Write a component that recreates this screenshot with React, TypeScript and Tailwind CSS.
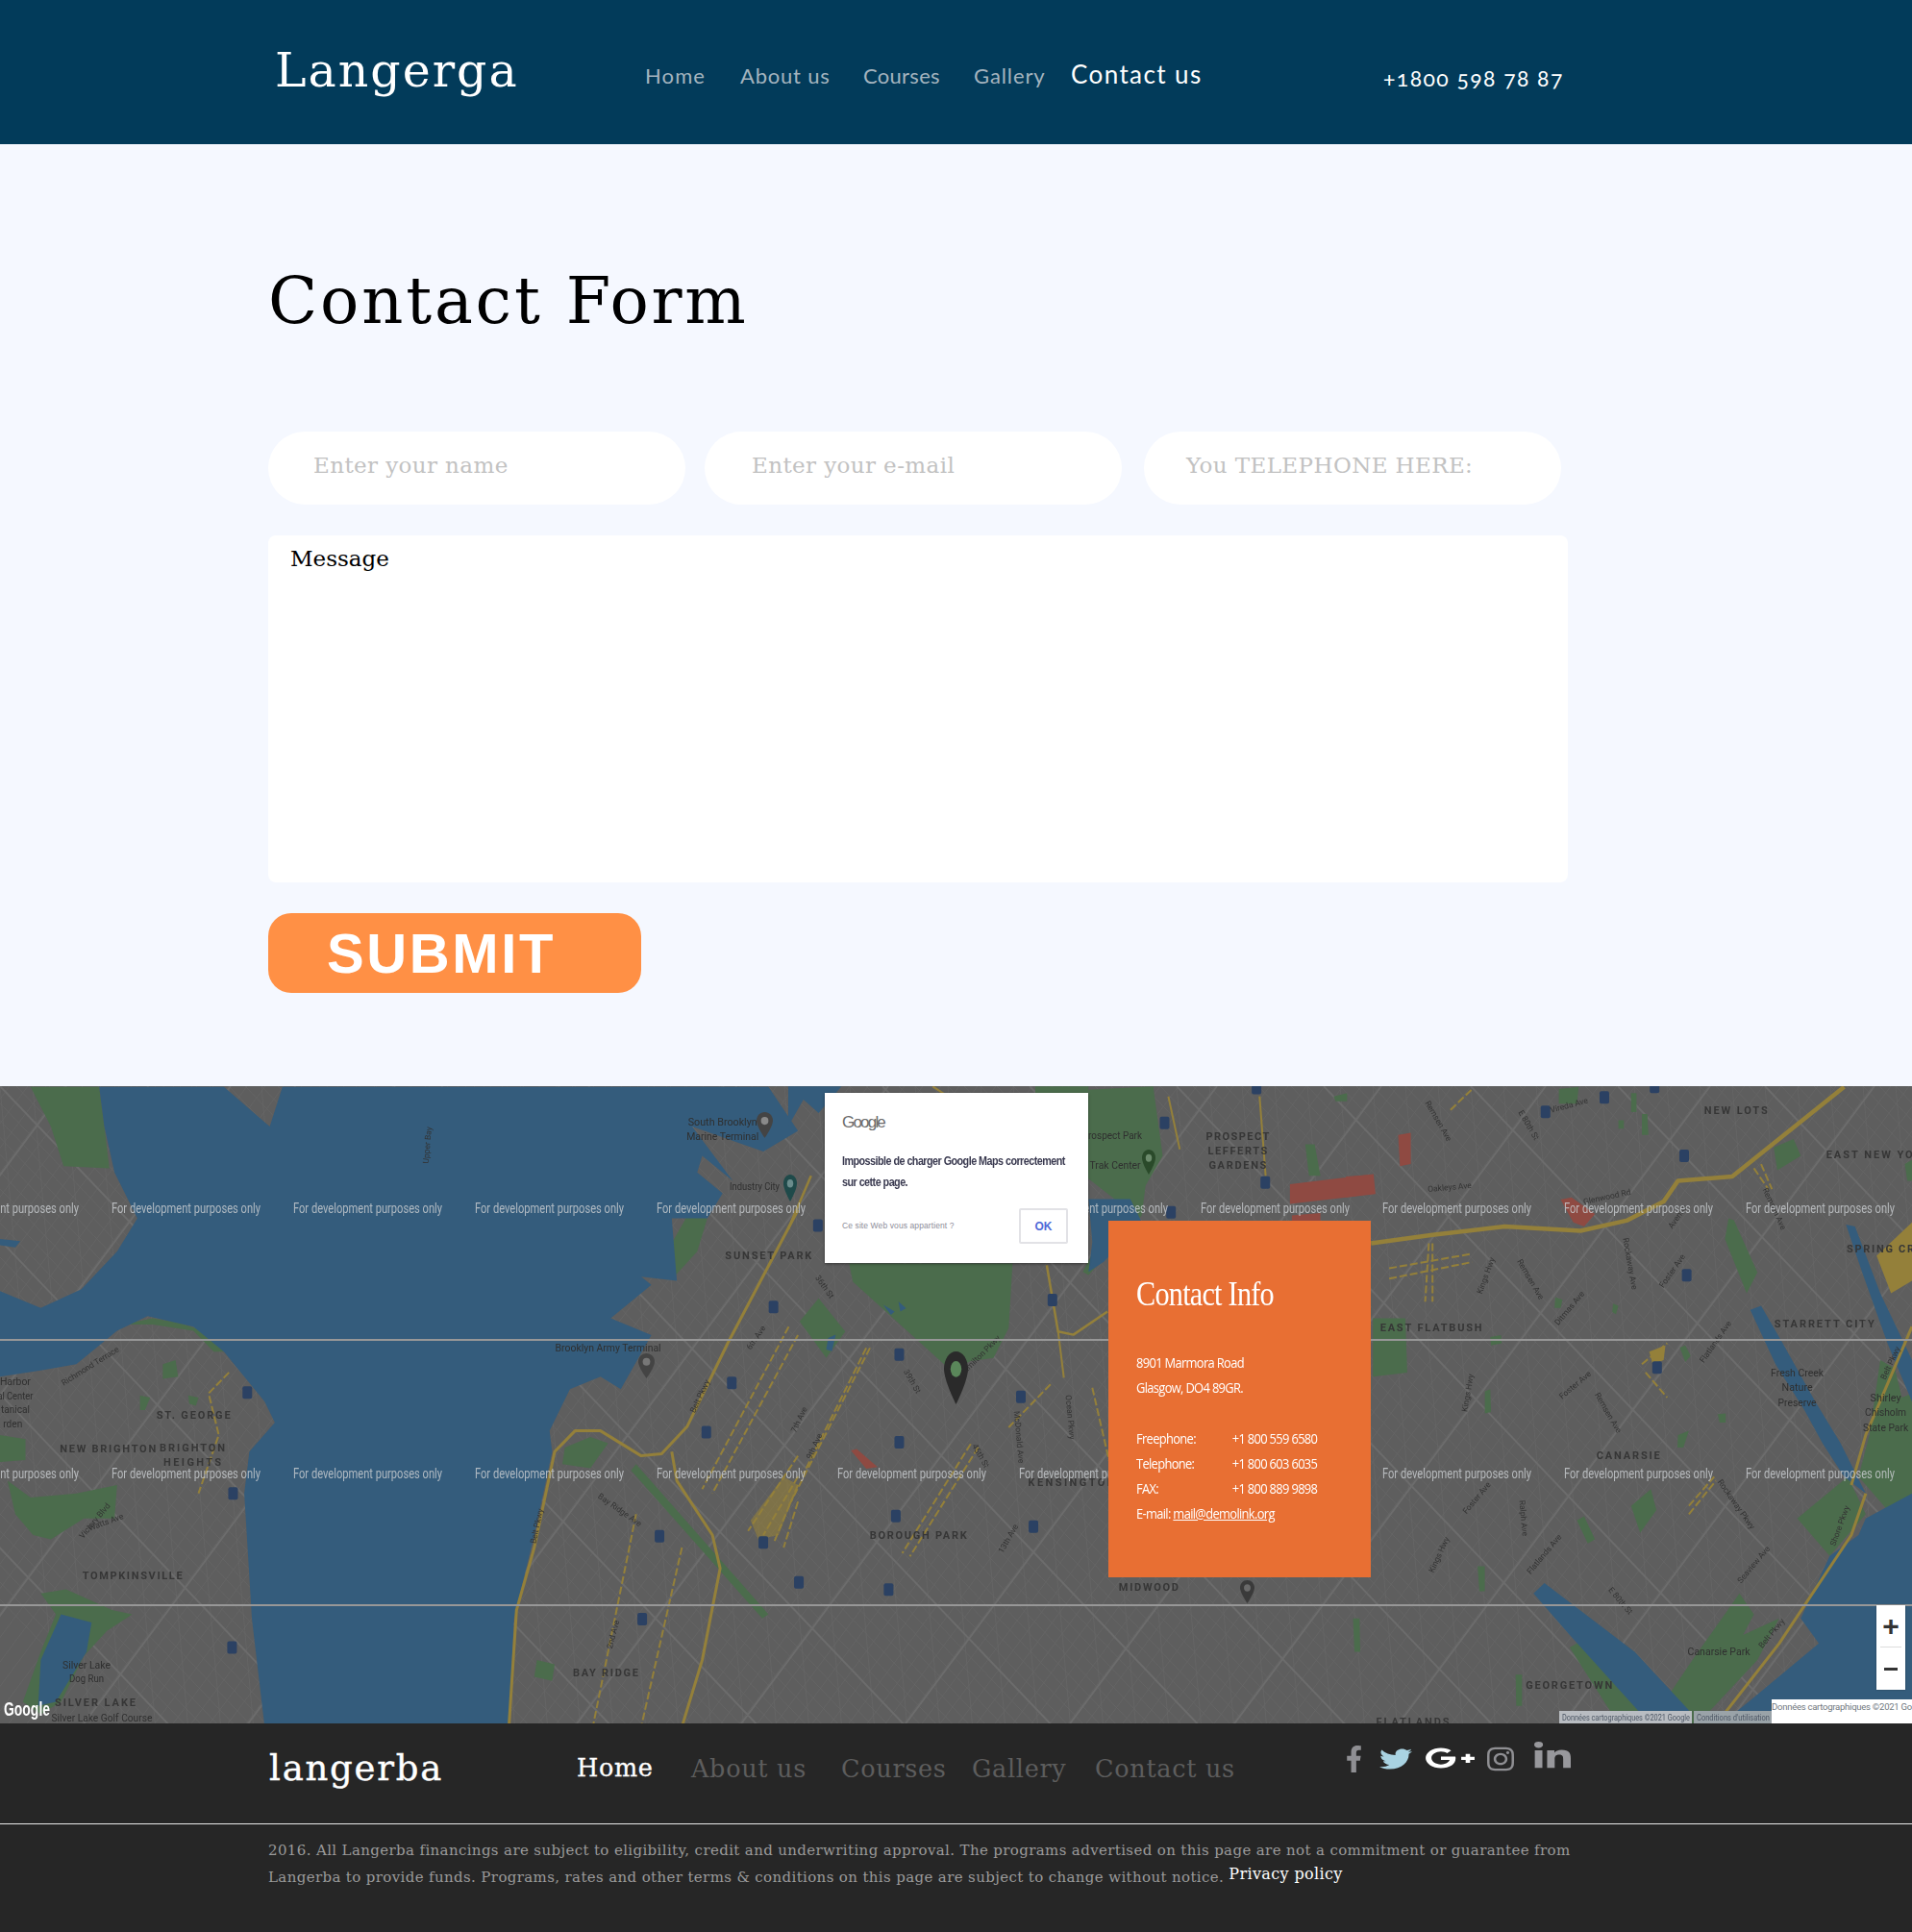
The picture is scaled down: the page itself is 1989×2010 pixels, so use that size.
import React from "react";
import { FaFacebookF, FaTwitter, FaGooglePlusG, FaInstagram, FaLinkedinIn } from "react-icons/fa";

type Zone = 3 | 4 | 5;
const fx = (z: Zone, x: number) => (z === 3 ? 820 + x / 2.529 : z === 4 ? x / 1.889 : 1400 + x / 2.662);
const fy = (z: Zone, y: number) => (z === 3 ? 1120 + y / 2.904 : 1120 + y / 2.306);
const P = (z: Zone, a: number[], close = true) => {
  let d = "";
  for (let i = 0; i < a.length; i += 2) d += (i ? "L" : "M") + fx(z, a[i]).toFixed(1) + " " + fy(z, a[i + 1]).toFixed(1);
  return d + (close ? "Z" : "");
};

const WATER = "#345c7c";
const GREEN = "#4b6c4c";
const ROAD = "#94803a";
const RED = "#8f4a42";

const waters: [Zone, number[]][] = [
  [4, [195,25,205,120,225,230,270,340,230,420,160,510,80,555,0,515,0,720,80,705,150,690,230,610,290,575,380,600,440,660,480,720,520,780,540,830,490,900,480,1000,490,1200,495,1300,520,1560,1000,1560,1010,1300,1050,1100,1085,900,1080,850,1120,750,1180,720,1220,750,1280,620,1200,580,1280,500,1260,480,1330,490,1320,340,1390,340,1420,280,1370,230,1380,190,1440,250,1360,120,1500,180,1568,130,1510,25,555,25,530,120,440,25]],
  [4, [0,390,40,395,30,410,0,405]],
  [4, [120,1290,180,1310,170,1380,110,1500,75,1510,80,1400]],
  [3, [0,30,140,30,80,110,40,70,0,150]],
  [3, [790,370,900,370,930,440,830,560,790,590,800,500]],
  [3, [250,690,280,710,270,720]],
  [3, [290,680,310,700,295,710]],
  [3, [105,790,125,780,115,830,100,825]],
  [5, [1568,1000,1440,1060,1420,1100,1340,1150,1260,1300,1310,1360,1130,1490,1030,1560,1568,1560]],
  [5, [1385,355,1410,360,1480,520,1568,680,1568,780,1500,640,1430,470]],
  [5, [520,1240,550,1215,800,1380,950,1520,940,1560,850,1560,620,1340]],
  [5, [1120,560,1150,550,1210,640,1300,780,1370,880,1440,1000,1380,960,1320,880,1270,800,1190,690]],
];
const greens: [Zone, number[]][] = [
  [4, [60,25,195,25,205,120,215,220,125,215,100,120]],
  [4, [1320,400,1350,335,1390,340,1370,420,1325,480]],
  [4, [1110,890,1160,865,1195,880,1160,940,1105,930]],
  [4, [0,860,50,870,50,920,0,925]],
  [4, [15,970,60,1010,150,1000,230,980,225,1060,165,1060,100,1110,65,1100,30,1050]],
  [4, [80,1240,130,1230,220,1280,260,1290,210,1330,165,1390,120,1500,80,1530,45,1500,80,1380,110,1290]],
  [4, [1055,1400,1090,1410,1085,1450,1050,1440]],
  [4, [1250,930,1510,1290,1498,1300,1240,945]],
  [4, [320,690,345,680,350,720,320,725]],
  [4, [275,765,295,770,285,800,275,800]],
  [4, [370,765,390,770,385,790,372,785]],
  [4, [240,595,300,580,350,590,400,610,440,660,420,660,380,610,300,595]],
  [3, [160,565,590,565,580,760,540,850,480,860,430,890,170,620]],
  [3, [650,30,790,30,790,100,650,80]],
  [3, [790,40,960,30,985,240,940,330,930,420,790,600,775,590,830,470,870,380,780,300]],
  [3, [30,740,80,670,150,770,100,850]],
  [3, [1435,60,1470,50,1470,75,1440,75]],
  [3, [1360,205,1385,205,1400,300,1370,300]],
  [5, [590,30,645,25,640,65,590,65]],
  [5, [790,40,805,40,805,85,790,85]],
  [5, [820,90,835,90,838,140,820,140]],
  [5, [755,105,770,105,770,125,755,125]],
  [5, [1060,340,1075,345,1140,470,1110,520,1050,390]],
  [5, [1185,170,1240,150,1260,190,1195,225]],
  [5, [75,580,165,580,170,710,75,720]],
  [5, [400,625,430,620,432,640,402,645]],
  [5, [1250,1060,1390,960,1440,1050,1340,1150]],
  [5, [1450,860,1480,680,1520,700,1540,770,1568,760,1568,1040,1510,1050,1420,960]],
  [5, [890,1490,960,1400,1090,1240,1130,1290,1100,1340,1200,1300,1140,1400,1010,1520,980,1560,900,1560]],
  [5, [620,1370,660,1350,810,1480,810,1560,760,1560]],
  [5, [640,1065,660,1055,690,1110,670,1120]],
  [5, [790,1030,845,990,860,1040,815,1095]],
  [5, [920,860,950,850,935,890,918,890]],
  [5, [925,650,940,645,955,670,940,685]],
  [5, [385,755,400,750,402,805,385,808]],
  [5, [365,1175,385,1175,385,1235,370,1235]],
  [5, [20,1300,38,1300,40,1380,24,1380]],
  [5, [470,1435,488,1435,488,1510,472,1510]],
  [5, [740,545,755,550,748,570,738,565]],
  [5, [580,530,600,535,595,555,578,555]],
  [5, [1030,810,1052,808,1052,830,1035,830]],
  [5, [1548,210,1568,200,1568,250,1555,250]],
];
const reds: [Zone, number[]][] = [
  [5, [145,140,180,135,180,210,150,215]],
  [5, [0,240,75,235,80,280,0,290]],
  [5, [595,295,625,290,690,330,660,360,630,350]],
  [3, [1320,325,1540,295,1545,355,1320,385]],
  [3, [1325,420,1400,412,1400,436,1325,436]],
  [3, [165,1130,180,1125,235,1180,205,1185]],
];
const yellows: [Zone, number[], number][] = [
  [4, [1000,1560,1015,1280,1050,1130,1090,900,1130,850,1180,850,1260,910,1300,905,1350,840,1430,640,1568,320], 3],
  [4, [1320,900,1330,970,1400,1100,1415,1180,1380,1400,1340,1560], 3],
  [5, [70,400,240,380,440,360,650,370,780,345,880,300,920,250,1070,240,1380,25], 4.5],
  [3, [1000,60,1030,220], 2],
  [3, [680,570,710,770,750,780,840,710], 2.5],
  [3, [710,770,725,910], 2],
  [3, [1240,60,1256,300], 2],
  [3, [380,30,420,60], 2],
  [3, [60,300,0,460], 2.5],
  [5, [1440,1000,1400,1100,1200,1360,1020,1560], 3],
  [5, [1568,600,1440,860,1400,980], 3],
];
const dashes: [Zone, number[]][] = [
  [4, [1550,600,1380,990]],
  [4, [1568,620,1400,1000]],
  [4, [1250,1050,1165,1560]],
  [4, [1340,1130,1260,1560]],
  [4, [450,710,410,760,430,860,390,1000]],
  [4, [1568,910,1470,1090]],
  [4, [1568,960,1500,1100]],
  [4, [1568,980,1520,1120]],
  [4, [1568,1020,1540,1130]],
  [3, [690,930,580,1060]],
  [3, [215,820,0,1300]],
  [3, [205,820,40,1200]],
  [3, [480,1110,300,1440]],
  [3, [500,1120,320,1450]],
  [3, [800,940,860,1240]],
  [5, [120,460,350,425]],
  [5, [120,485,350,445]],
  [5, [230,400,220,540]],
  [5, [240,400,240,540]],
  [5, [290,80,350,30]],
  [5, [1130,220,1170,270]],
  [5, [1150,210,1180,270]],
  [5, [820,690,890,640]],
  [5, [830,710,890,770]],
  [5, [950,1050,1025,970]],
  [5, [950,1030,1020,960]],
];
const subways: [Zone, number, number][] = [
  [4, 486, 758],[4, 458, 1000],[4, 456, 1370],[4, 1520, 553],[4, 1438, 735],[4, 1388, 853],[4, 1296, 1103],[4, 1262, 1302],[4, 1500, 1118],
  [3, 78, 450],[3, 292, 840],[3, 292, 1105],[3, 283, 1328],[3, 612, 968],[3, 645, 1360],[3, 695, 675],[3, 990, 140],[3, 1255, 320],[3, 1007, 410],[3, 1232, 35],[3, 28, 1528],[3, 264, 1550],
  [5, 553, 85],[5, 716, 50],[5, 937, 190],[5, 944, 477],[5, 862, 698],[5, 855, 25],
];
const labels: [Zone, number, number, string, number?, number?][] = [
  [4, 1420, 118, "South Brooklyn", 11, 72],[4, 1420, 153, "Marine Terminal", 11, 75],[4, 1483, 273, "Industry City", 11, 52],
  [4, 1195, 660, "Brooklyn Army Terminal", 11, 110],[4, 30, 740, "Harbor", 11, 32],[4, 30, 775, "al Center", 11, 37],[4, 30, 808, "tanical", 11, 30],[4, 25, 842, "rden", 11, 20],
  [4, 170, 1420, "Silver Lake", 11, 50],[4, 170, 1453, "Dog Run", 11, 36],[4, 200, 1548, "Silver Lake Golf Course", 11, 105],
  [5, 1250, 720, "Fresh Creek", 11, 55],[5, 1250, 755, "Nature", 11, 32],[5, 1250, 790, "Preserve", 11, 40],[5, 1495, 780, "Shirley", 11, 32],[5, 1495, 815, "Chisholm", 11, 43],[5, 1495, 850, "State Park", 11, 47],[5, 1033, 1388, "Canarsie Park", 11, 65],
  [3, 860, 190, "rospect Park", 11, 56],[3, 860, 278, "Trak Center", 11, 53],
];
const hoods: [Zone, number, number, string, number][] = [
  [4, 380, 820, "ST. GEORGE", 77],[4, 212, 902, "NEW BRIGHTON", 100],[4, 378, 900, "BRIGHTON", 68],[4, 378, 935, "HEIGHTS", 60],[4, 260, 1205, "TOMPKINSVILLE", 104],[4, 187, 1510, "SILVER LAKE", 84],[4, 1190, 1440, "BAY RIDGE", 68],[4, 1510, 437, "SUNSET PARK", 90],
  [3, 1182, 192, "PROSPECT", 66],[3, 1182, 236, "LEFFERTS", 62],[3, 1182, 280, "GARDENS", 60],[3, 342, 1398, "BOROUGH PARK", 101],[3, 948, 1555, "MIDWOOD", 62],[3, 745, 1236, "KENSINGTON", 90],
  [5, 1080, 90, "NEW LOTS", 66],[5, 1450, 197, "EAST NEW YO", 90],[5, 1480, 423, "SPRING CR", 70],[5, 236, 612, "EAST FLATBUSH", 106],[5, 1325, 603, "STARRETT CITY", 104],[5, 782, 917, "CANARSIE", 66],[5, 618, 1468, "GEORGETOWN", 90],[5, 185, 1556, "FLATLANDS", 76],
];
const streetNames: [Zone, number, number, string, number][] = [
  [4, 180, 700, "Richmond Terrace", -32],[4, 190, 1070, "Victory Blvd", -50],[4, 210, 1075, "Watts Ave", -20],[4, 1380, 770, "Belt Pkwy", -65],[4, 1060, 1080, "Belt Pkwy", -78],[4, 1215, 1045, "Bay Ridge Ave", 35],[4, 845, 165, "Upper Bay", -85],[4, 1490, 630, "6th Ave", -55],[4, 1210, 1340, "2nd Ave", -75],
  [5, 250, 110, "Remsen Ave", 60],[5, 500, 120, "E 80th St", 60],[5, 620, 75, "Vireda Ave", -15],[5, 288, 272, "Oakleys Ave", -5],[5, 725, 295, "Glenwood Rd", -12],[5, 1180, 320, "Remsen Ave", 65],[5, 925, 340, "Avenue", -55],[5, 910, 470, "Foster Ave", -55],[5, 395, 480, "Kings Hwy", -70],[5, 625, 560, "Ditmas Ave", -50],[5, 505, 490, "Remsen Ave", 60],[5, 780, 450, "Rockaway Ave", 80],[5, 1030, 640, "Flatlands Ave", -55],[5, 640, 745, "Foster Ave", -40],[5, 720, 810, "Remsen Ave", 60],[5, 345, 760, "Kings Hwy", -80],[5, 1515, 690, "Belt Pkwy", -65],[5, 1075, 1030, "Rockaway Pkwy", 55],[5, 368, 1015, "Foster Ave", -50],[5, 265, 1150, "Kings Hwy", -65],[5, 555, 1150, "Flatlands Ave", -50],[5, 485, 1060, "Ralph Ave", 85],[5, 1135, 1175, "Seaview Ave", -50],[5, 755, 1262, "E 80th St", 50],[5, 1185, 1340, "Belt Pkwy", -50],[5, 1375, 1080, "Shore Pkwy", -70],
  [3, 90, 640, "36th St", 55],[3, 320, 925, "39th St", 60],[3, 500, 1150, "45th St", 60],[3, 35, 1040, "7th Ave", -65],[3, 75, 1120, "9th Ave", -65],[3, 600, 1090, "McDonald Ave", 85],[3, 735, 1030, "Ocean Pkwy", 85],[3, 585, 1400, "13th Ave", -60],[3, 500, 860, "Ft Hamilton Pkwy", -45],
];

function StreetGrid() {
  const thin: string[] = [];
  const major: string[] = [];
  for (let i = -30; i < 200; i++) {
    const a = i * 17;
    thin.push(`M${a} 1130L${a + 640} 1800`);
    const b = i * 19 - 300;
    thin.push(`M${b} 1800L${b + 500} 1130`);
    if (i % 9 === 0) {
      major.push(`M${a} 1130L${a + 640} 1800`);
      major.push(`M${b + 40} 1800L${b + 540} 1130`);
    }
  }
  for (let i = 0; i < 60; i++) {
    thin.push(`M${i * 34} 1130L${i * 34 + 60} 1800`);
  }
  return (
    <>
      <path d={thin.join("")} stroke="#676767" strokeWidth="0.7" fill="none" />
      <path d={major.join("")} stroke="#6c6c6c" strokeWidth="2" fill="none" />
    </>
  );
}

function Pin({ x, y, w, h, fill, hole }: { x: number; y: number; w: number; h: number; fill: string; hole: string }) {
  return (
    <g transform={`translate(${x} ${y}) scale(${w / 24} ${h / 36})`}>
      <path d="M12 0C5.4 0 0 5.2 0 11.8 0 20 12 36 12 36s12-16 12-24.2C24 5.2 18.6 0 12 0Z" fill={fill} />
      <circle cx="12" cy="12" r="5.5" fill={hole} />
    </g>
  );
}

function MapDrawing() {
  const rows = [1262, 1538];
  const cols = [-73, 116, 305, 494, 683, 871, 1060, 1249, 1438, 1627, 1816];
  return (
    <svg viewBox="0 1130 1989 663" className="absolute inset-0 w-full h-full blur-[0.7px]" preserveAspectRatio="none">
      <rect x="0" y="1130" width="1989" height="663" fill="#5e5e5e" />
      <StreetGrid />
      {greens.map(([z, a], i) => (
        <path key={i} d={P(z, a)} fill={GREEN} />
      ))}
      {waters.map(([z, a], i) => (
        <path key={i} d={P(z, a)} fill={WATER} />
      ))}
      {reds.map(([z, a], i) => (
        <path key={i} d={P(z, a)} fill={RED} />
      ))}
      {dashes.map(([z, a], i) => (
        <path key={i} d={P(z, a, false)} stroke={ROAD} strokeWidth="2" strokeDasharray="8 3" fill="none" />
      ))}
      {yellows.map(([z, a, w], i) => (
        <path key={i} d={P(z, a, false)} stroke={ROAD} strokeWidth={w} fill="none" strokeLinejoin="round" />
      ))}
      <path d={P(5, [1470, 430, 1568, 350, 1568, 490, 1510, 520])} fill={ROAD} />
      <path d={P(4, [1475, 1065, 1540, 960, 1568, 980, 1530, 1100, 1490, 1110])} fill={ROAD} opacity="0.6" />
      <path d={P(5, [840, 660, 885, 645, 880, 680, 850, 690])} fill={ROAD} />
      {subways.map(([z, x, y], i) => (
        <rect key={i} x={fx(z, x) - 5} y={fy(z, y) - 6.5} width="10" height="13" rx="2" fill="#2b4163" />
      ))}
      {labels.map(([z, x, y, t, s, w], i) => (
        <text key={i} x={fx(z, x)} y={fy(z, y)} textAnchor="middle" fontSize={s} textLength={w} lengthAdjust="spacingAndGlyphs" fill="#2f2f2f" className="font-['Roboto',sans-serif]">{t}</text>
      ))}
      {hoods.map(([z, x, y, t, w], i) => (
        <text key={i} x={fx(z, x)} y={fy(z, y)} textAnchor="middle" fontSize="11" textLength={w} fill="#363636" fontWeight="700" className="font-['Roboto',sans-serif]">{t}</text>
      ))}
      {streetNames.map(([z, x, y, t, r], i) => (
        <text key={i} transform={`translate(${fx(z, x)} ${fy(z, y)}) rotate(${r})`} textAnchor="middle" fontSize="8.5" fill="#333333" className="font-['Roboto',sans-serif]">{t}</text>
      ))}
      <Pin x={787} y={1157} w={17} h={27} fill="#444444" hole="#8a8a8a" />
      <Pin x={815} y={1222} w={14} h={28} fill="#1f4a4a" hole="#6a8c8c" />
      <Pin x={664} y={1408} w={17} h={26} fill="#444444" hole="#777777" />
      <Pin x={1188} y={1196} w={14} h={26} fill="#2a4a2a" hole="#6c8b6c" />
      <Pin x={1290} y={1644} w={15} h={24} fill="#3a3a3a" hole="#6a6a6a" />
      <Pin x={982} y={1406} w={25} h={55} fill="#2a2a2a" hole="#5a875a" />
      <rect x="0" y="1393" width="1989" height="2" fill="#979797" />
      <rect x="0" y="1669" width="1989" height="2" fill="#979797" />
      {rows.map((y) =>
        cols.map((x) => (
          <text key={`${x}-${y}`} x={x} y={y} fontSize="14" textLength="155" lengthAdjust="spacingAndGlyphs" fill="#c9cdd1" fillOpacity="0.82" className="font-['Roboto',sans-serif]">For development purposes only</text>
        ))
      )}
      <text x="4" y="1785" fontSize="20" fontWeight="700" textLength="48" lengthAdjust="spacingAndGlyphs" fill="#ffffff" className="font-['Liberation_Sans',sans-serif]">Google</text>
      <rect x="1622" y="1780" width="138" height="13" fill="#b9bdc2" />
      <rect x="1762" y="1780" width="81" height="13" fill="#9aa3a8" />
      <text x="1625" y="1790" fontSize="9" textLength="133" lengthAdjust="spacingAndGlyphs" fill="#4b5563" className="font-['Roboto',sans-serif]">Données cartographiques ©2021 Google</text>
      <text x="1765" y="1790" fontSize="9" textLength="76" lengthAdjust="spacingAndGlyphs" fill="#4b5563" className="font-['Roboto',sans-serif]">Conditions d'utilisation</text>
    </svg>
  );
}

const serif = "font-['DejaVu_Serif',serif]";

function Field({ w, ml, pl, text }: { w: string; ml: string; pl: string; text: string }) {
  return (
    <div className={`${w} ${ml} ${pl} h-[76px] rounded-[38px] bg-white pt-[21px] font-['DejaVu_Serif',serif] text-[23px] leading-[28px] tracking-[0.4px] text-[#c2c2c2] whitespace-nowrap`}>
      {text}
    </div>
  );
}

export default function App() {
  return (
    <div className="w-[1989px] h-[2010px] overflow-hidden bg-[#f5f8ff]">
      <header className="h-[150px] bg-[#023b5a] flex items-baseline pl-[286px] pt-[39px] whitespace-nowrap">
        <div className={`${serif} text-[49px] leading-[66px] tracking-[2px] text-white w-[385px] relative top-[2px]`}>Langerga</div>
        <nav className="flex items-baseline relative top-[-1px] font-['Lato',sans-serif] text-[22px] tracking-[0.9px] text-[#a4b4bf]">
          <a className="w-[99px] tracking-[1.1px]">Home</a>
          <a className="w-[128px] tracking-[0.8px]">About us</a>
          <a className="w-[115px] tracking-[0.3px]">Courses</a>
          <a className="w-[101px]">Gallery</a>
          <a className="w-[325px] text-[26px] tracking-[1.4px] text-white">Contact us</a>
        </nav>
        <div className="font-['Lato',sans-serif] text-[23px] tracking-[1.4px] oldstyle-nums text-white relative top-[2px]">+1800 598 78 87</div>
      </header>

      <main className="h-[980px] pl-[279px]">
        <h1 className={`${serif} pt-[118px] h-[299px] text-[67px] leading-[90px] tracking-[2.8px] text-black font-normal`}>Contact Form</h1>
        <div className="flex">
          <Field w="w-[434px]" ml="" pl="pl-[47px]" text="Enter your name" />
          <Field w="w-[434px]" ml="ml-[20px]" pl="pl-[49px]" text="Enter your e-mail" />
          <Field w="w-[434px]" ml="ml-[23px]" pl="pl-[44px]" text="You TELEPHONE HERE:" />
        </div>
        <div className={`${serif} w-[1352px] h-[361px] mt-[32px] rounded-[8px] bg-white pl-[23px] pt-[10px] text-[23px] leading-[28px] text-black`}>Message</div>
        <button className="block w-[388px] h-[83px] mt-[32px] rounded-[24px] bg-[#ff9045] pl-[61px] text-left font-['Liberation_Sans',sans-serif] font-bold text-[58px] leading-[81px] tracking-[2.6px] text-white">SUBMIT</button>
      </main>

      <section className="relative h-[663px] overflow-hidden">
        <MapDrawing />
        <div className="absolute left-[858px] top-[7px] w-[274px] h-[177px] bg-white shadow-[0_1px_3px_rgba(0,0,0,0.4)] pl-[18px] font-['Liberation_Sans',sans-serif]">
          <div className="pt-[21px] text-[17px] leading-[20px] tracking-[-1.8px] text-[#6b6b6b]">Google</div>
          <div className="pt-[19px] origin-left scale-x-[0.83] text-[13px] leading-[21.5px] font-bold tracking-[-0.65px] text-[#3a3a50] whitespace-nowrap">
            Impossible de charger Google Maps correctement
            <br />
            sur cette page.
          </div>
          <div className="flex items-center justify-between pr-[21px] pt-[17px]">
            <span className="text-[8.5px] tracking-[0.1px] text-[#8d8d99] whitespace-nowrap">Ce site Web vous appartient ?</span>
            <button className="w-[51px] h-[37px] rounded-[2px] border-2 border-[#e2e2e6] text-[12px] font-bold text-[#4f6ad8] origin-center">OK</button>
          </div>
        </div>
        <aside className="absolute left-[1153px] top-[140px] w-[273px] h-[371px] bg-[#e86f33] pl-[29px] pt-[54px] text-white whitespace-nowrap overflow-hidden">
          <h2 className="origin-left scale-x-[0.84] font-['Liberation_Serif',serif] text-[36px] leading-[44px] tracking-[-0.9px] font-normal">Contact Info</h2>
          <div className="mt-[37px] origin-left scale-x-[0.89] font-['Open_Sans',sans-serif] text-[14.5px] leading-[25.7px] tracking-[-0.75px]">
            <div>8901 Marmora Road</div>
            <div>Glasgow, DO4 89GR.</div>
            <div className="mt-[28px] flex"><span className="w-[112px]">Freephone:</span><span>+1 800 559 6580</span></div>
            <div className="flex"><span className="w-[112px]">Telephone:</span><span>+1 800 603 6035</span></div>
            <div className="flex"><span className="w-[112px]">FAX:</span><span>+1 800 889 9898</span></div>
            <div>E-mail: <a className="underline">mail@demolink.org</a></div>
          </div>
        </aside>
        <div className="absolute left-[1952px] top-[540px] w-[30px] h-[88px] bg-white flex flex-col items-center shadow-[0_0_2px_rgba(0,0,0,0.3)]">
          <div className="h-[43px] w-full flex items-center justify-center text-[30px] leading-none font-['Liberation_Sans',sans-serif] font-bold text-[#333333]">+</div>
          <div className="h-px w-[22px] bg-[#dddddd]" />
          <div className="h-[44px] w-full flex items-center justify-center"><div className="w-[14px] h-[3px] bg-[#333333]" /></div>
        </div>
        <div className="absolute left-[1843px] bottom-0 w-[146px] h-[25px] bg-white font-['Roboto',sans-serif] text-[9.5px] leading-[16px] tracking-[-0.25px] text-[#707880] whitespace-nowrap overflow-hidden">Données cartographiques ©2021 Google</div>
      </section>

      <footer className="h-[217px] bg-[#262626]">
        <div className="h-[104px] flex items-baseline pl-[280px] pt-[23px] whitespace-nowrap relative">
          <div className={`${serif} text-[37px] leading-[44px] font-normal tracking-[1.8px] text-white [-webkit-text-stroke:0.4px_white] w-[320px] relative top-[2px]`}>langerba</div>
          <nav className={`${serif} flex items-baseline text-[25.5px] tracking-[0.7px] text-[#5d5d5d] relative top-[-1px]`}>
            <a className="w-[119px] text-white relative top-[-1px] [-webkit-text-stroke:0.3px_white]">Home</a>
            <a className="w-[156px]">About us</a>
            <a className="w-[136px]">Courses</a>
            <a className="w-[128px]">Gallery</a>
            <a>Contact us</a>
          </nav>
          <div className="absolute left-[1400px] top-[19px] flex items-start">
            <FaFacebookF className="mt-[4px] w-[17px] h-[28px] text-[#8f8f93]" preserveAspectRatio="none" />
            <FaTwitter className="ml-[18px] mt-[5px] w-[34px] h-[26px] text-[#a9d3e2]" preserveAspectRatio="none" />
            <FaGooglePlusG className="ml-[13px] mt-[3px] w-[53px] h-[28px] text-white" preserveAspectRatio="none" />
            <FaInstagram className="ml-[12px] mt-[4px] w-[28px] h-[28px] text-[#8f8f93]" preserveAspectRatio="none" />
            <FaLinkedinIn className="ml-[21px] w-[38px] h-[31px] text-[#98989c]" preserveAspectRatio="none" />
          </div>
        </div>
        <div className="h-px bg-white opacity-90" />
        <div className={`${serif} pl-[279px] pt-[14px] text-[15px] leading-[27px] tracking-[0.37px] text-[#9a9a9a] whitespace-nowrap`}>
          <div>2016. All Langerba financings are subject to eligibility, credit and underwriting approval. The programs advertised on this page are not a commitment or guarantee from</div>
          <div>Langerba to provide funds. Programs, rates and other terms &amp; conditions on this page are subject to change without notice. <span className="relative top-[-3px] text-[16px] text-white">Privacy policy</span></div>
        </div>
      </footer>
    </div>
  );
}
